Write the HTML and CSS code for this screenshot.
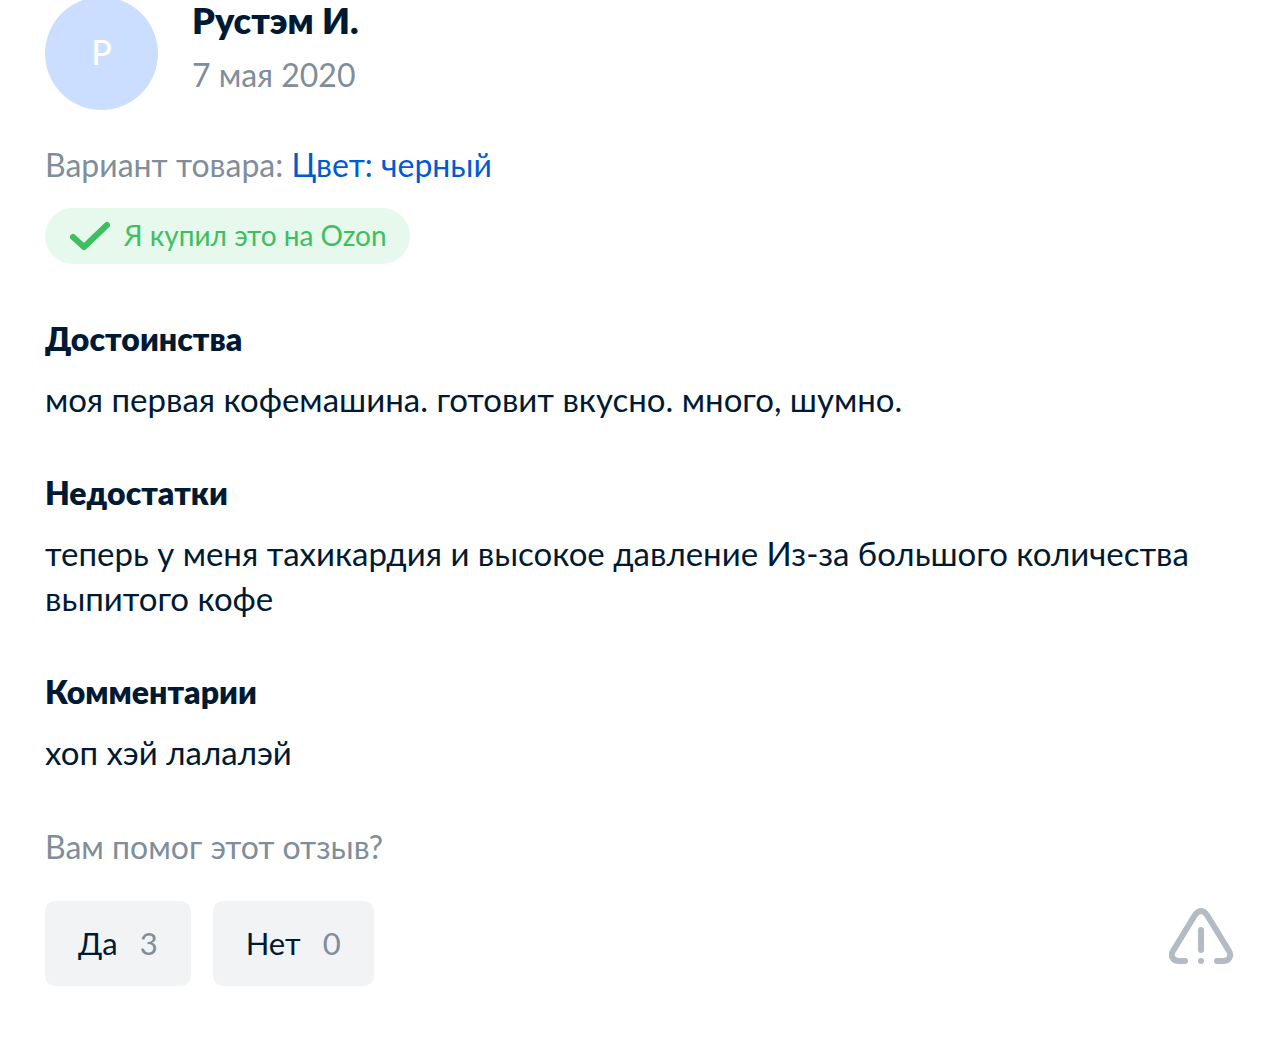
FILE: index.html
```html
<!DOCTYPE html>
<html lang="ru">
<head>
<meta charset="utf-8">
<meta name="viewport" content="width=device-width, initial-scale=1">
<title>Отзыв о товаре</title>
<link rel="stylesheet" href="styles.css">
</head>
<body>
<article class="review">
  <header class="author">
    <div class="avatar" aria-hidden="true">Р</div>
    <div class="author-info">
      <h2 class="author-name">Рустэм И.</h2>
      <time class="date" datetime="2020-05-07">7 мая 2020</time>
    </div>
  </header>
  <p class="variant">Вариант товара: <a class="variant-link" href="#">Цвет: черный</a></p>
  <div class="badge">
    <svg class="check" viewBox="0 0 40 30" aria-hidden="true"><path d="M3 16 14 26 37 4"/></svg>
    <span>Я купил это на Ozon</span>
  </div>
  <div class="blocks">
    <section>
      <h3 class="block-title">Достоинства</h3>
      <p class="block-text">моя первая кофемашина. готовит вкусно. много, шумно.</p>
    </section>
    <section>
      <h3 class="block-title">Недостатки</h3>
      <p class="block-text">теперь у меня тахикардия и высокое давление Из-за большого количества выпитого кофе</p>
    </section>
    <section>
      <h3 class="block-title">Комментарии</h3>
      <p class="block-text">хоп хэй лалалэй</p>
    </section>
  </div>
  <footer class="feedback">
    <p class="question">Вам помог этот отзыв?</p>
    <div class="actions">
      <button class="vote" type="button">Да <span class="count">3</span></button>
      <button class="vote" type="button">Нет <span class="count">0</span></button>
      <button class="report" type="button" aria-label="Пожаловаться">
        <svg class="report-icon" viewBox="0 0 66 58" aria-hidden="true"><path d="M16 54H10C4 54 1 49 4 44L26 8Q32 0 38 8L60 44C63 49 60 54 54 54H48M32 23V43"/><circle cx="32" cy="54" r="3"/></svg>
      </button>
    </div>
  </footer>
</article>
</body>
</html>
```
FILE: styles.css
```css
* { box-sizing: border-box; }
body { margin: 0; background: #fff; color: #001a34; font: 32px/45px "Lato", sans-serif; }
h2, h3, p { margin: 0; }
.review { padding: 0 45px 66px; }
.author { display: flex; gap: 34px; height: 110px; align-items: flex-end; }
.avatar { width: 113px; height: 113px; flex: none; border-radius: 50%; background: #ccdeff; color: #fff; font-size: 34px; font-weight: 500; line-height: 110px; text-align: center; }
.author-info { height: 110px; }
.author-name { font-size: 36px; line-height: 40px; font-weight: 800; }
.date { display: block; padding-top: 12px; color: #808d9a; }
.variant { margin-top: 32px; color: #808d9a; }
.variant-link { color: #005bd1; text-decoration: none; }
.badge { display: flex; width: fit-content; align-items: center; gap: 14px; height: 56px; margin-top: 21px; padding: 0 23px 0 25px; border-radius: 28px; background: #e6f9ec; color: #3dbf61; font-size: 28px; line-height: 40px; }
.badge span { padding-bottom: 2px; }
.check { width: 40px; height: 30px; fill: none; stroke: currentColor; stroke-width: 6; stroke-linecap: round; stroke-linejoin: round; }
.blocks { display: flex; flex-direction: column; gap: 48px; margin-top: 52px; }
.block-title { font-size: 32px; font-weight: 800; line-height: 45px; }
.block-text { margin-top: 16px; font-size: 33px; }
.feedback { margin-top: 49px; }
.question { color: #808d9a; }
.actions { display: flex; gap: 22px; margin-top: 32px; }
.vote { display: flex; align-items: center; gap: 22px; height: 85px; padding: 0 33px; border: 0; border-radius: 10px; background: #f2f3f5; color: #001a34; font: inherit; font-size: 31px; }
.count { color: #808d9a; }
.report { margin-left: auto; padding: 0 0 16px; border: 0; background: none; }
.report-icon { display: block; width: 66px; height: 58px; fill: none; stroke: #b3bcc5; stroke-width: 6; stroke-linecap: round; }
.report-icon circle { fill: #b3bcc5; stroke: none; }
```
